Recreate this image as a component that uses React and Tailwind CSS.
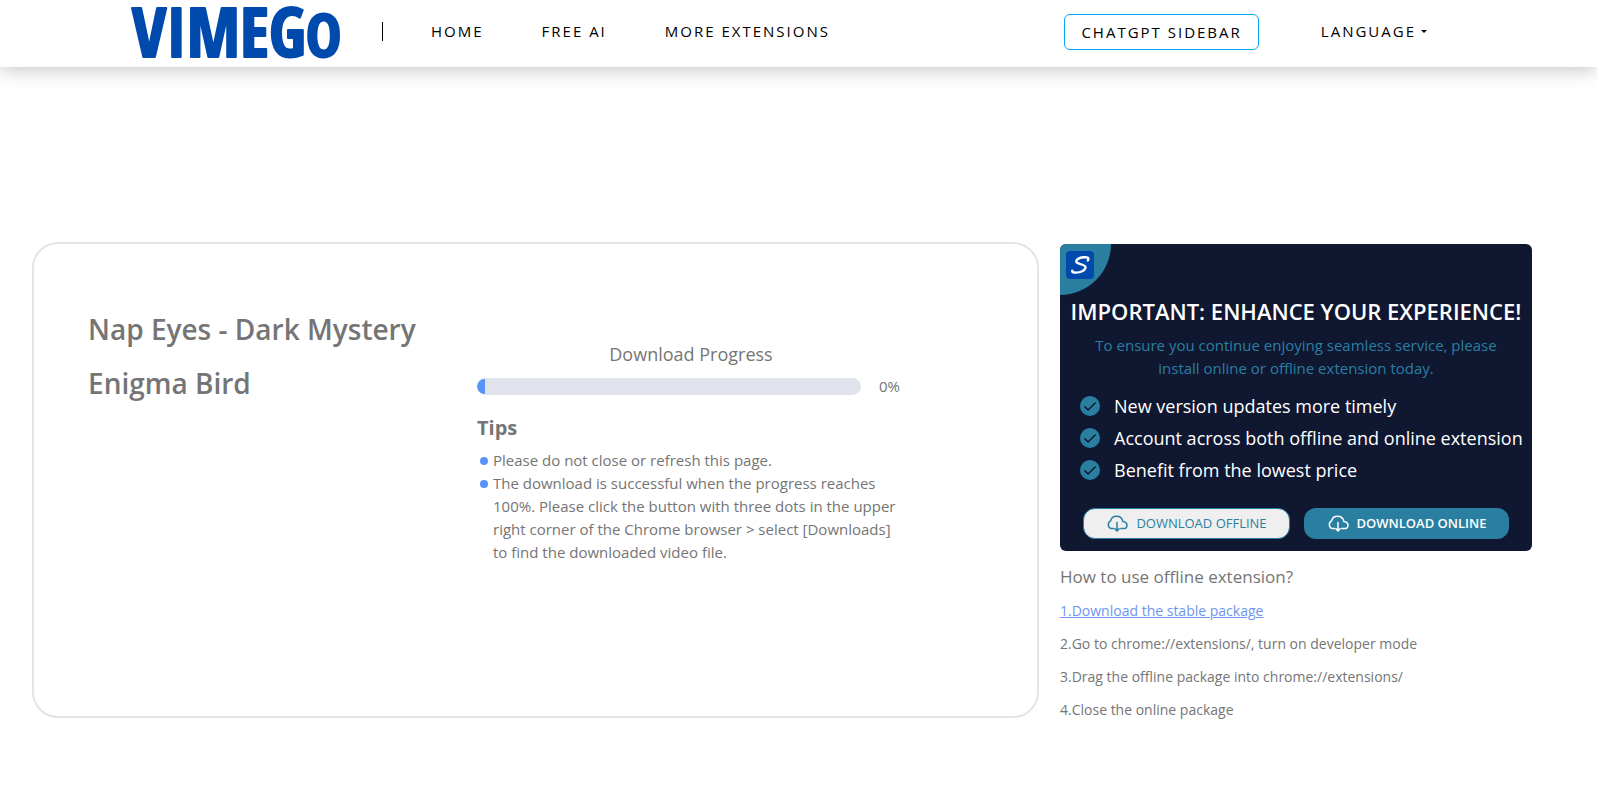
const tips = [
  "Please do not close or refresh this page.",
  "The download is successful when the progress reaches 100%. Please click the button with three dots in the upper right corner of the Chrome browser > select [Downloads] to find the downloaded video file.",
];

const benefits = [
  "New version updates more timely",
  "Account across both offline and online extension",
  "Benefit from the lowest price",
];

const steps = [
  "2.Go to chrome://extensions/, turn on developer mode",
  "3.Drag the offline package into chrome://extensions/",
  "4.Close the online package",
];

function CloudDownload() {
  return (
    <svg viewBox="0 0 22 17" className="h-[17px] w-[22px] shrink-0" fill="none" stroke="currentColor" strokeWidth="1.5" strokeLinecap="round" strokeLinejoin="round" aria-hidden="true">
      <path d="M7.6 13.6H5.2A4.2 4.2 0 0 1 4.6 5.9C5.2 3 7.7 1.2 10.6 1.2c3.2 0 5.7 2.2 6.2 5.2 2.4.3 4.2 1.6 4.2 3.8 0 2-1.5 3.4-3.4 3.4h-2.8" />
      <path d="M11 7.5v8.3M9 13.9l2 2 2-2" />
    </svg>
  );
}

function CheckCircle() {
  return (
    <svg viewBox="0 0 20 20" className="size-5 shrink-0" aria-hidden="true">
      <circle cx="10" cy="10" r="10" fill="#2a7fa1" />
      <path d="M4.5 10.3l3.6 3.7 7.6-7.5" fill="none" stroke="#101731" strokeWidth="1.5" />
    </svg>
  );
}

function Header() {
  return (
    <header className="flex h-[67px] items-center bg-white pr-[170px] pb-1 pl-[131px] text-[15px] tracking-[2px] text-black shadow-[0_0_20px_rgba(0,0,0,0.3)]">
      <a href="#" aria-label="Vimego" className="flex items-center">
        <svg viewBox="0 0 209 63" className="h-[63px] w-[209px]" fill="#004aad" stroke="#004aad" strokeWidth="2" strokeLinejoin="round" aria-hidden="true">
          <text x="1" y="57" className="font-['Open_Sans_Condensed','Roboto_Condensed','Liberation_Sans_Narrow',sans-serif] text-[68px] font-bold tracking-normal">
            VIMEG<tspan className="text-[60px]">O</tspan>
          </text>
        </svg>
      </a>
      <span className="ml-[42px] h-[19px] w-px bg-black" />
      <nav className="ml-[48px] flex flex-1 items-center gap-[58px]">
        <a href="#">HOME</a>
        <a href="#">FREE AI</a>
        <a href="#">MORE EXTENSIONS</a>
      </nav>
      <a href="#" className="rounded-md border border-[#03a9f4] px-4 py-[5px] leading-6">CHATGPT SIDEBAR</a>
      <button type="button" className="ml-[62px] flex items-center gap-[5px] tracking-[2px]">
        LANGUAGE
        <span className="border-x-[3px] border-t-[3px] border-x-transparent border-t-black" />
      </button>
    </header>
  );
}

function DownloadCard() {
  return (
    <section className="flex min-h-[476px] flex-1 rounded-[26px] border-2 border-[#e4e4e4] px-[54px] pt-[58px]">
      <h1 className="w-[389px] shrink-0 text-[28px] leading-[54px] font-semibold">
        Nap Eyes - Dark Mystery Enigma Bird
      </h1>
      <div className="w-[428px] pt-10">
        <p className="text-center text-lg leading-6">Download Progress</p>
        <div className="mt-2 flex items-center gap-[18px]">
          <div role="progressbar" aria-label="Download Progress" aria-valuenow={0} className="flex h-[17px] w-[384px] items-center overflow-hidden rounded-full bg-[#e0e3eb]">
            <div className="h-[15px] w-2 rounded-l-full bg-[#5892fb]" />
          </div>
          <span className="text-[15px] leading-6">0%</span>
        </div>
        <h2 className="mt-[14px] text-xl leading-8 font-bold">Tips</h2>
        <ul className="mt-[5px] text-[15px] leading-[23px]">
          {tips.map((tip) => (
            <li key={tip} className="flex gap-[5px] pl-[3px]">
              <span className="mt-2 size-2 shrink-0 rounded-full bg-[#5892fb]" />
              {tip}
            </li>
          ))}
        </ul>
      </div>
    </section>
  );
}

function Promo() {
  return (
    <section className="relative rounded-md bg-[#101731] pt-[49px] pb-3 text-white">
      <div className="absolute top-0 left-0 size-[51px] rounded-tl-md rounded-br-[51px] bg-[#2a7fa1] p-[6px]">
        <svg viewBox="0 0 28 28" className="mt-px size-7" aria-hidden="true">
          <rect width="28" height="28" rx="4" fill="#004aad" />
          <path d="M21.8 9.5C23.5 6.5 21 6 17.5 6.3 13 6.700 10 8.6 10.300 10.800c.4 2.500 9.200 2.200 9.200 5.500 0 3.500-5.500 5.200-9.500 5.300-3 0-4-.5-3.800-1.900" fill="none" stroke="#fff" strokeWidth="2.4" strokeLinecap="round" />
        </svg>
      </div>
      <h2 className="text-center text-[22px] leading-9 font-semibold whitespace-nowrap">IMPORTANT: ENHANCE YOUR EXPERIENCE!</h2>
      <p className="mx-auto mt-[5px] w-[430px] text-center text-[15px] leading-[23px] text-[#2a7fa1]">
        To ensure you continue enjoying seamless service, please install online or offline extension today.
      </p>
      <ul className="mt-[10px] pl-5 text-lg leading-8">
        {benefits.map((benefit) => (
          <li key={benefit} className="flex items-center gap-[14px] whitespace-nowrap">
            <CheckCircle />
            {benefit}
          </li>
        ))}
      </ul>
      <div className="mt-[22px] flex gap-[14px] px-[23px] text-[13px]">
        <button type="button" className="flex h-[31px] flex-1 items-center justify-center gap-2 rounded-xl border border-[#2a7fa1] bg-[#efefef] text-[#2a7fa1]">
          <CloudDownload />
          DOWNLOAD OFFLINE
        </button>
        <button type="button" className="flex h-[31px] flex-1 items-center justify-center gap-2 rounded-xl bg-[#2a7fa1] font-semibold">
          <CloudDownload />
          DOWNLOAD ONLINE
        </button>
      </div>
    </section>
  );
}

export default function App() {
  return (
    <div className="font-['Open_Sans',sans-serif] text-[#757575]">
      <Header />
      <main className="flex items-start gap-[21px] pt-[175px] pr-[65px] pb-20 pl-8">
        <DownloadCard />
        <aside className="w-[472px] shrink-0 pt-[2px]">
          <Promo />
          <h3 className="mt-[10px] text-[17px] leading-8">How to use offline extension?</h3>
          <div className="mt-px flex flex-col items-start text-sm leading-[33px]">
            <a href="#" className="text-[#6f95ec] underline">1.Download the stable package</a>
            {steps.map((step) => (
              <p key={step}>{step}</p>
            ))}
          </div>
        </aside>
      </main>
    </div>
  );
}
